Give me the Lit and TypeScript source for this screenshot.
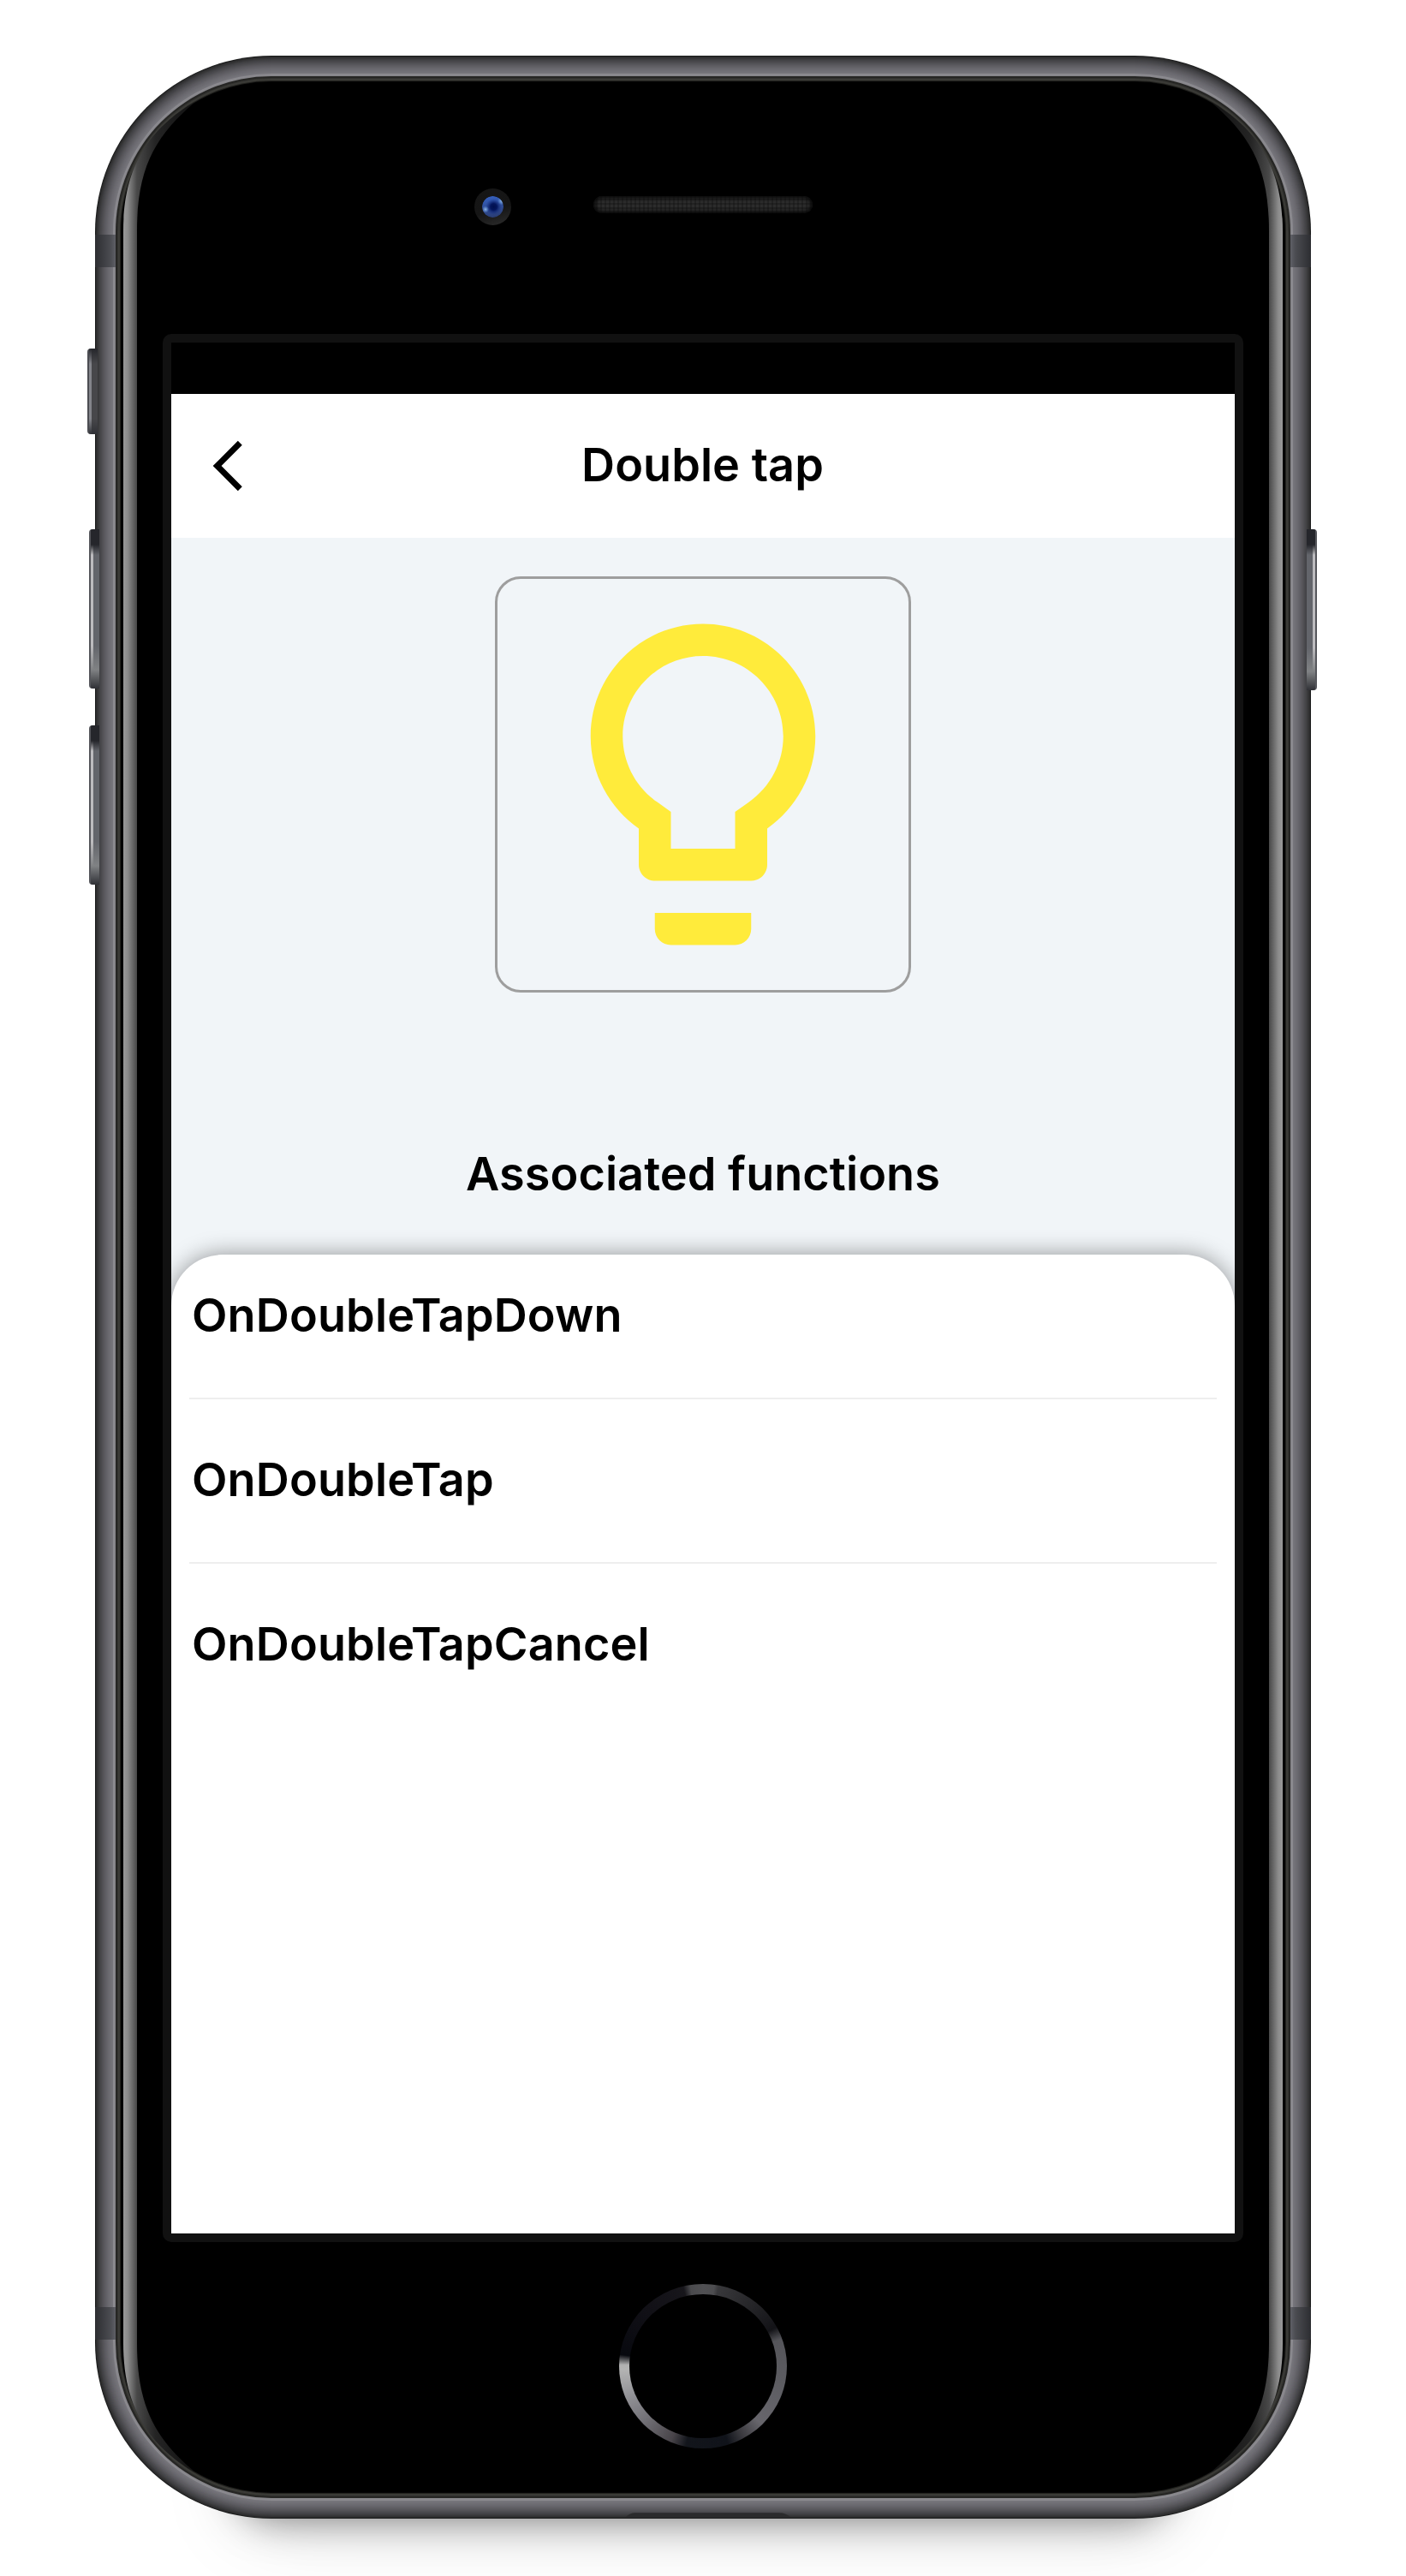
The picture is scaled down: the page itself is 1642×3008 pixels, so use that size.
import { LitElement, html, svg, css } from "lit";
import { customElement, property } from "lit/decorators.js";

type Stop = [number, number[]];

/** Brushed metal profile, from the outer edge of the chassis inwards. */
const METAL: Stop[] = [
  [0, [28, 29, 29]],
  [1, [44, 44, 45]],
  [5, [66, 66, 69]],
  [10, [88, 87, 92]],
  [15, [106, 105, 111]],
  [20, [118, 117, 123]],
  [20.9, [120, 119, 125]],
  [21, [140, 139, 144]],
  [23, [134, 133, 138]],
  [24, [38, 38, 36]],
  [25, [38, 38, 36]],
  [27, [60, 60, 56]],
  [28, [58, 58, 54]],
  [29, [34, 34, 31]],
  [30, [4, 4, 4]],
  [31, [0, 0, 0]],
];

function metalAt(d: number): string {
  let i = 0;
  while (i < METAL.length - 2 && METAL[i + 1][0] <= d) i++;
  const [a, ca] = METAL[i];
  const [b, cb] = METAL[i + 1];
  const t = Math.min(1, Math.max(0, (d - a) / (b - a)));
  return `rgb(${ca.map((v, k) => Math.round(v + (cb[k] - v) * t)).join(",")})`;
}

const GLARE =
  "M33 205 C33 150 48 93 117 54 C71 93 49 130 49 205 L49 2671 C49 2746 71 2783 117 2822 C48 2783 33 2726 33 2671 Z";

@customElement("phone-chassis")
export class PhoneChassis extends LitElement {
  static styles = css`
    :host {
      display: block;
    }
    svg {
      display: block;
    }
  `;
  render() {
    const layers = Array.from({ length: 32 }, (_, i) => i);
    const bands = [
      [0, 209, "band-l"],
      [0, 2629, "band-l"],
      [1396, 209, "band-r"],
      [1396, 2629, "band-r"],
    ] as [number, number, string][];
    return html`<svg width="1420" height="2876" viewBox="0 0 1420 2876">
      <defs>
        <linearGradient id="glare" gradientUnits="userSpaceOnUse" x1="33" x2="117" y1="0" y2="0">
          <stop offset="0" stop-color="#999" />
          <stop offset="0.06" stop-color="#8c8c8c" />
          <stop offset="0.19" stop-color="#484848" />
          <stop offset="0.45" stop-color="#242424" />
          <stop offset="1" stop-color="#111" />
        </linearGradient>
        <linearGradient id="band-l">
          <stop offset="0" stop-color="#2c2d31" />
          <stop offset="0.75" stop-color="#4b4c51" />
          <stop offset="1" stop-color="#5f6067" />
        </linearGradient>
        <linearGradient id="band-r">
          <stop offset="0" stop-color="#5f6067" />
          <stop offset="0.25" stop-color="#4b4c51" />
          <stop offset="1" stop-color="#2c2d31" />
        </linearGradient>
      </defs>
      ${layers.map(
        (i) => svg`<rect x=${i} y=${i} width=${1420 - 2 * i} height=${2876 - 2 * i}
          rx=${206 - i} fill=${metalAt(i)} />`
      )}
      ${bands.map(
        ([x, y, g]) => svg`<rect x=${x} y=${y} width="24" height="38" fill="url(#${g})" />`
      )}
      <path d="M619 2875 Q624 2869.3 631 2869.3 H799 Q807 2869.3 813 2875 Z" fill="#2b2b2c" />
      <path d=${GLARE} fill="url(#glare)" />
      <path d=${GLARE} fill="url(#glare)" transform="translate(1420 0) scale(-1 1)" />
    </svg>`;
  }
}

@customElement("phone-camera")
export class PhoneCamera extends LitElement {
  static styles = css`
    :host,
    svg {
      display: block;
    }
  `;
  render() {
    return html`<svg width="43" height="43" viewBox="0 0 43 43">
      <defs>
        <linearGradient id="ring" x1="0.3" y1="0" x2="0.6" y2="1">
          <stop offset="0" stop-color="#161616" />
          <stop offset="0.6" stop-color="#151515" />
          <stop offset="1" stop-color="#282828" />
        </linearGradient>
        <linearGradient id="lens" x1="0.3" y1="0" x2="0.5" y2="1">
          <stop offset="0" stop-color="#3560c0" />
          <stop offset="1" stop-color="#2a3d74" />
        </linearGradient>
        <radialGradient id="pupil">
          <stop offset="0" stop-color="#00104e" />
          <stop offset="0.4" stop-color="#04165c" />
          <stop offset="1" stop-color="#1a348a" stop-opacity="0" />
        </radialGradient>
        <radialGradient id="spark">
          <stop offset="0" stop-color="#8fb8ea" />
          <stop offset="1" stop-color="#6f9fe0" stop-opacity="0" />
        </radialGradient>
        <clipPath id="iris"><circle cx="21.5" cy="21.5" r="12.5" /></clipPath>
      </defs>
      <circle cx="21.5" cy="21.5" r="21.5" fill="url(#ring)" />
      <g clip-path="url(#iris)">
        <circle cx="21.5" cy="21.5" r="12.5" fill="url(#lens)" />
        <circle cx="22.5" cy="21.5" r="9.5" fill="url(#pupil)" />
        <circle cx="32" cy="14.5" r="5" fill="url(#spark)" />
        <circle cx="13" cy="24.5" r="4" fill="url(#spark)" />
      </g>
    </svg>`;
  }
}

@customElement("function-list")
export class FunctionList extends LitElement {
  @property({ type: Array }) items: string[] = [];
  static styles = css`
    :host {
      display: flex;
      flex-direction: column;
      flex: 1;
      background: #fff;
      border-radius: 60px 60px 0 0;
      box-shadow: 0 0 27px rgba(0, 0, 0, 0.4);
      padding: 0 21px;
    }
    .row {
      box-sizing: border-box;
      height: 192px;
      padding: 0 3px 2px;
      display: flex;
      align-items: center;
      border-bottom: 2px solid #eee;
      font-weight: 600;
      font-size: 54px;
      line-height: 66px;
      letter-spacing: 0.12px;
    }
    .row:first-child {
      height: 169px;
      padding-bottom: 25px;
    }
    .row:last-child {
      border-bottom-color: transparent;
    }
  `;
  render() {
    return this.items.map((t) => html`<div class="row">${t}</div>`);
  }
}

@customElement("app-root")
export class AppRoot extends LitElement {
  static styles = css`
    :host {
      display: block;
      box-sizing: border-box;
      width: 1642px;
      height: 3008px;
      padding: 65px 111px 0;
      overflow: hidden;
      background: #fff;
      color: #000;
      font-family: Inter, "Liberation Sans", sans-serif;
    }
    .phone {
      position: relative;
      box-sizing: border-box;
      width: 1420px;
      height: 2876px;
      display: flex;
      flex-direction: column;
      align-items: center;
    }
    .ground {
      position: absolute;
      left: 165px;
      right: 165px;
      bottom: 0;
      height: 90px;
      border-radius: 45px;
      box-shadow: 0 0 46px rgba(0, 0, 0, 0.5), 0 6px 100px rgba(0, 0, 0, 0.13);
    }
    .chassis {
      position: absolute;
      inset: 0;
    }
    .btn {
      position: absolute;
      width: 12px;
      height: 186px;
      left: -7px;
      border-radius: 4px 0 0 4px;
      background: linear-gradient(90deg, #55565b 2px, transparent 2px),
        linear-gradient(#25262b 0 18px, transparent 30px calc(100% - 50px), #808284 calc(100% - 22px), #303136),
        linear-gradient(90deg, #bdbcbf 5px, #63656b 5px);
    }
    .btn.up {
      top: 553px;
    }
    .btn.down {
      top: 782px;
    }
    .btn.mute {
      left: -9px;
      top: 342px;
      height: 100px;
      background: linear-gradient(90deg, #4c4d52 2px, transparent 2px),
        linear-gradient(#25262b, transparent 18px calc(100% - 18px), #303136),
        linear-gradient(90deg, #84858b 5px, #47474a 5px);
    }
    .btn.power {
      left: 1415px;
      top: 553px;
      height: 188px;
      transform: scaleX(-1);
    }
    .top {
      position: relative;
      box-sizing: border-box;
      height: 325px;
      width: 100%;
      display: flex;
      align-items: flex-start;
      padding: 155px 0 0 443px;
      gap: 96px;
    }
    .speaker {
      width: 256px;
      height: 20px;
      margin-top: 9px;
      border-radius: 10px;
      background: repeating-linear-gradient(90deg, transparent 0 3px, rgba(0, 0, 0, 0.22) 3px 5px),
        repeating-linear-gradient(transparent 0 3px, rgba(0, 0, 0, 0.22) 3px 5px), #2b2b2b;
      box-shadow: inset 0 0 4px 2px #060606;
    }
    .screen {
      position: relative;
      width: 1242px;
      height: 2208px;
      border: 10px solid #111;
      border-radius: 10px;
      background: #000;
      display: flex;
      flex-direction: column;
    }
    .app {
      margin-top: 60px;
      flex: 1;
      display: flex;
      flex-direction: column;
      background: #f1f5f8;
      overflow: hidden;
    }
    .bar {
      height: 168px;
      display: grid;
      grid-template-columns: 120px 1fr 120px;
      align-items: center;
      background: #fff;
    }
    .bar svg {
      display: block;
      margin-left: 46px;
    }
    .title,
    .subtitle {
      margin: 0;
      font-weight: 600;
      font-size: 54px;
      line-height: 66px;
      text-align: center;
      letter-spacing: 0.05px;
    }
    .title {
      padding: 0 1px 2px 0;
    }
    .card {
      box-sizing: border-box;
      width: 486px;
      height: 486px;
      margin: 45px auto 0;
      border: 3px solid #9e9e9e;
      border-radius: 30px;
      padding: 15px;
    }
    .card svg {
      display: block;
    }
    .subtitle {
      margin: 179px 0 61px;
    }
    .home {
      position: relative;
      box-sizing: border-box;
      width: 196px;
      height: 192px;
      margin-top: 49px;
      padding: 12px;
      border-radius: 50%;
      background: conic-gradient(#505053 0deg, #4d4d50 8deg, #38383b 11deg, #242427 40deg, #131317 62deg, #55555a 71deg, #5c5c61 100deg, #67666c 135deg, #3c3b40 150deg, #10131a 162deg, #12151b 192deg, #484449 203deg, #737278 228deg, #959599 250deg, #b4b4b4 268deg, #b0b0b0 271deg, #08090f 278deg, #111016 315deg, #17161b 346deg, #4a4a4d 351deg, #505053 360deg);
    }
    .dish {
      width: 100%;
      height: 100%;
      border-radius: 50%;
      background: #000;
    }
  `;

  render() {
    return html`<div class="phone">
      <div class="ground"></div>
      <phone-chassis class="chassis"></phone-chassis>
      <div class="btn mute"></div>
      <div class="btn up"></div>
      <div class="btn down"></div>
      <div class="btn power"></div>
      <div class="top">
        <phone-camera></phone-camera>
        <div class="speaker"></div>
      </div>
      <div class="screen">
        <div class="app">
          <header class="bar">
            <svg width="40" height="60" viewBox="0 0 40 60">
              <path d="M34.3 3.3 L7.6 30 L34.3 56.7" fill="none" stroke="#000" stroke-width="7" />
            </svg>
            <h1 class="title">Double tap</h1>
          </header>
          <div class="card">
            <svg width="450" height="450" viewBox="0 0 24 24" fill="#ffeb3b">
              <path
                d="M9 21c0 .55.45 1 1 1h4c.55 0 1-.45 1-1v-1H9v1zm3-19C8.14 2 5 5.14 5 9c0 2.38 1.19 4.47 3 5.74V17c0 .55.45 1 1 1h6c.55 0 1-.45 1-1v-2.26c1.81-1.27 3-3.36 3-5.74 0-3.86-3.14-7-7-7zm2.85 11.1l-.85.6V16h-4v-2.3l-.85-.6C7.8 12.16 7 10.63 7 9c0-2.76 2.24-5 5-5s5 2.24 5 5c0 1.63-.8 3.16-2.15 4.1z"
              />
            </svg>
          </div>
          <h2 class="subtitle">Associated functions</h2>
          <function-list .items=${["OnDoubleTapDown", "OnDoubleTap", "OnDoubleTapCancel"]}></function-list>
        </div>
      </div>
      <div class="home"><div class="dish"></div></div>
    </div>`;
  }
}
